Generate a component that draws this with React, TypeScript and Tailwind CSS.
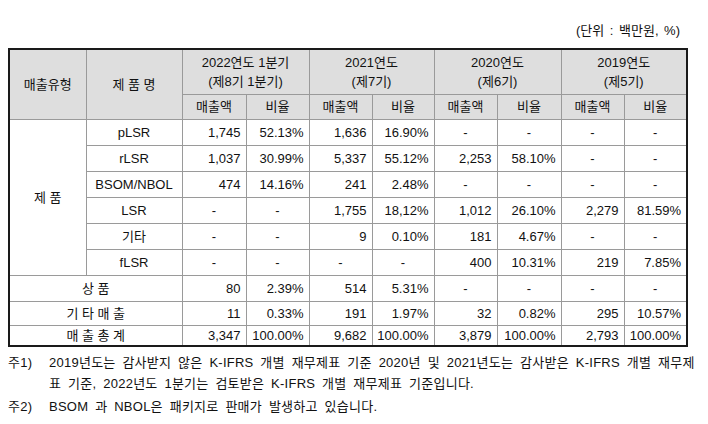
import React from "react";

type Row = {
  label?: string;
  name?: string;
  values: string[];
};

const products: Row[] = [
  { name: "pLSR", values: ["1,745", "52.13%", "1,636", "16.90%", "-", "-", "-", "-"] },
  { name: "rLSR", values: ["1,037", "30.99%", "5,337", "55.12%", "2,253", "58.10%", "-", "-"] },
  { name: "BSOM/NBOL", values: ["474", "14.16%", "241", "2.48%", "-", "-", "-", "-"] },
  { name: "LSR", values: ["-", "-", "1,755", "18,12%", "1,012", "26.10%", "2,279", "81.59%"] },
  { name: "기타", values: ["-", "-", "9", "0.10%", "181", "4.67%", "-", "-"] },
  { name: "fLSR", values: ["-", "-", "-", "-", "400", "10.31%", "219", "7.85%"] },
];

const totals: (Row & { h: string })[] = [
  { label: "상 품", h: "h-[26px]", values: ["80", "2.39%", "514", "5.31%", "-", "-", "-", "-"] },
  { label: "기 타 매 출", h: "h-[24px]", values: ["11", "0.33%", "191", "1.97%", "32", "0.82%", "295", "10.57%"] },
  { label: "매 출 총 계", h: "h-[21px]", values: ["3,347", "100.00%", "9,682", "100.00%", "3,879", "100.00%", "2,793", "100.00%"] },
];

const periods = [
  ["2022연도 1분기", "(제8기 1분기)"],
  ["2021연도", "(제7기)"],
  ["2020연도", "(제6기)"],
  ["2019연도", "(제5기)"],
];

const widths = ["w-[77px]", "w-[96px]", "w-[64px]", "w-[63px]", "w-[63px]", "w-[62px]", "w-[63px]", "w-[64px]", "w-[63px]", "w-[63px]"];

const cell = "border border-[#9a9a9a] p-0";

function Num({ v }: { v: string }) {
  if (v === "-") return <td className={`${cell} text-center`}>-</td>;
  return <td className={`${cell} text-right pr-[5px]`}>{v}</td>;
}

export default function App() {
  return (
    <div className="w-[708px] h-[424px] bg-white text-[#111] text-[13px] leading-none font-['Liberation_Sans','Noto_Sans_CJK_KR',sans-serif]">
      <div className="flex justify-end pr-[28px] pt-[24px] h-[48px]">
        <span className="[word-spacing:2px]">(단위 : 백만원, %)</span>
      </div>

      <table className="ml-[8px] w-[678px] table-fixed border-collapse border-2 border-[#1a1a1a]">
        <colgroup>
          {widths.map((w, i) => (
            <col key={i} className={w} />
          ))}
        </colgroup>
        <thead className="bg-[#dedede]">
          <tr className="h-[45px]">
            <th rowSpan={2} className={`${cell} font-normal`}>매출유형</th>
            <th rowSpan={2} className={`${cell} font-normal`}>제 품 명</th>
            {periods.map((p) => (
              <th key={p[0]} colSpan={2} className={`${cell} font-normal leading-[19px]`}>
                <div>{p[0]}</div>
                <div>{p[1]}</div>
              </th>
            ))}
          </tr>
          <tr className="h-[25px]">
            {periods.map((p) => (
              <React.Fragment key={p[0]}>
                <th className={`${cell} font-normal`}>매출액</th>
                <th className={`${cell} font-normal`}>비율</th>
              </React.Fragment>
            ))}
          </tr>
        </thead>
        <tbody>
          {products.map((r, i) => (
            <tr key={r.name} className="h-[26px]">
              {i === 0 && (
                <td rowSpan={products.length} className={`${cell} text-center`}>제 품</td>
              )}
              <td className={`${cell} text-center`}>{r.name}</td>
              {r.values.map((v, j) => (
                <Num key={j} v={v} />
              ))}
            </tr>
          ))}
          {totals.map((r) => (
            <tr key={r.label} className={r.h}>
              <td colSpan={2} className={`${cell} text-center whitespace-pre`}>{r.label}</td>
              {r.values.map((v, j) => (
                <Num key={j} v={v} />
              ))}
            </tr>
          ))}
        </tbody>
      </table>

      {/* 주석 */}
      <div className="mt-[5px] pl-[8px] leading-[21px] [word-spacing:3px] tracking-[0.25px]">
        <div className="flex">
          <span className="w-[41px] shrink-0">주1)</span>
          <div className="whitespace-nowrap">
            <div>2019년도는 감사받지 않은 K-IFRS 개별 재무제표 기준 2020년 및 2021년도는 감사받은 K-IFRS 개별 재무제</div>
            <div>표 기준, 2022년도 1분기는 검토받은 K-IFRS 개별 재무제표 기준입니다.</div>
          </div>
        </div>
        <div className="flex mt-[2px]">
          <span className="w-[41px] shrink-0">주2)</span>
          <span className="whitespace-nowrap">BSOM 과 NBOL은 패키지로 판매가 발생하고 있습니다.</span>
        </div>
      </div>
    </div>
  );
}
